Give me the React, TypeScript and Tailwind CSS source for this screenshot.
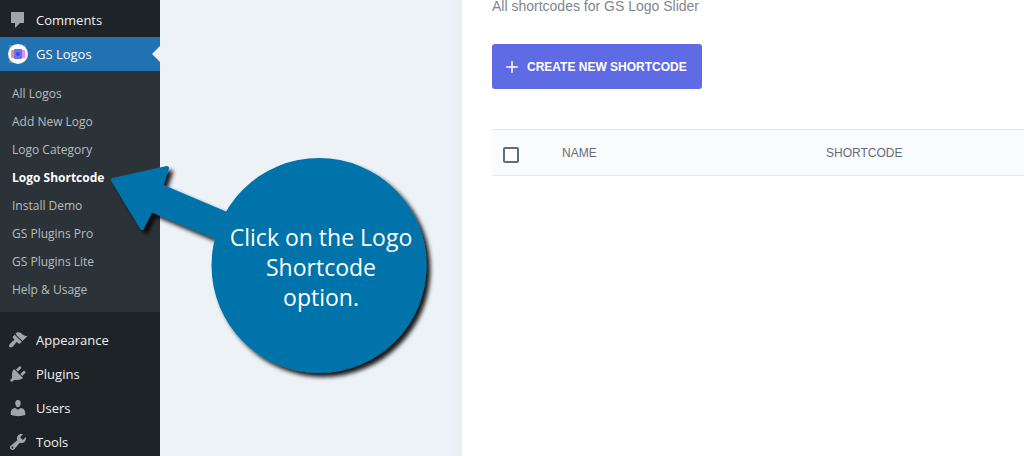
import { Plus } from 'lucide-react';

interface IconProps {
  path: string;
}

interface MenuItemProps {
  label: string;
  icon: string;
}

const icons = {
  comments: 'M3 2h13v11h-4l-5 5v-5H3z',
  appearance:
    'M14.48 11.06L7.41 3.99l1.5-1.5c.5-.56 2.3-.47 3.51.32 1.21.8 1.43 1.28 2.91 2.1 1.18.64 2.45 1.26 4.45.85zm-.71.71L6.7 4.7 4.93 6.47c-.39.39-.39 1.02 0 1.41l1.06 1.06c.39.39.39 1.03 0 1.42-.6.6-1.43 1.11-2.21 1.69-.35.26-.7.53-1.01.84C1.43 14.23.4 16.08 1.4 17.07c.99 1 2.84-.03 4.18-1.36.31-.31.58-.66.85-1.02.57-.78 1.08-1.61 1.69-2.21.39-.39 1.02-.39 1.41 0l1.06 1.06c.39.39 1.02.39 1.41 0z',
  plugins:
    'M13.11 4.36L9.87 7.6 8 5.73l3.24-3.24c.35-.34 1.05-.2 1.56.32.52.51.66 1.21.31 1.55zm-8 1.77l.91-1.12 9.01 9.01-1.19.84c-.71.71-2.63 1.16-3.82 1.16H6.14L4.9 17.26c-.59.59-1.54.59-2.12 0-.59-.58-.59-1.53 0-2.12l1.24-1.24v-3.88c0-1.13.4-3.19 1.09-3.89zm7.26 3.97l3.24-3.24c.34-.35 1.04-.21 1.55.31.52.51.66 1.21.31 1.55l-3.24 3.25z',
  users:
    'M10 9.25c-2.27 0-2.73-3.44-2.73-3.44C7 4.02 7.82 2 9.97 2c2.16 0 2.98 2.02 2.71 3.81 0 0-.41 3.44-2.68 3.44zm0 2.57L12.72 10c2.39 0 4.52 2.33 4.52 4.53v2.49s-3.65 1.13-7.24 1.13c-3.65 0-7.24-1.13-7.24-1.13v-2.49c0-2.25 1.94-4.48 4.47-4.48z',
  tools:
    'M16.68 9.77c-1.34 1.34-3.3 1.67-4.95.99l-5.41 6.52c-.99.99-2.59.99-3.58 0s-.99-2.59 0-3.57l6.52-5.42c-.68-1.65-.35-3.61.99-4.95 1.28-1.28 3.12-1.62 4.72-1.06l-2.89 2.89 2.82 2.82 2.86-2.87c.53 1.58.18 3.39-1.08 4.65zM3.81 16.21c.4.39 1.04.39 1.43 0 .4-.4.4-1.04 0-1.43-.39-.4-1.03-.4-1.43 0-.39.39-.39 1.03 0 1.43z',
};

const submenu = [
  'All Logos',
  'Add New Logo',
  'Logo Category',
  'Logo Shortcode',
  'Install Demo',
  'GS Plugins Pro',
  'GS Plugins Lite',
  'Help & Usage',
];

const bottomItems = [
  { label: 'Appearance', icon: icons.appearance },
  { label: 'Plugins', icon: icons.plugins },
  { label: 'Users', icon: icons.users },
  { label: 'Tools', icon: icons.tools },
];

function MenuIcon({ path }: IconProps) {
  return (
    <svg viewBox="0 0 20 20" className="w-5 h-5 fill-[#a0a5aa]" aria-hidden="true">
      <path d={path} />
    </svg>
  );
}

function MenuItem({ label, icon }: MenuItemProps) {
  return (
    <li>
      <a href="#" className="flex items-center gap-2 h-[34px] pl-2 leading-5 text-[#f0f0f1]">
        <MenuIcon path={icon} />
        {label}
      </a>
    </li>
  );
}

function GsLogo() {
  return (
    <svg viewBox="0 0 20 20" className="w-5 h-5" aria-hidden="true">
      <path d="M1 1h4v4H1zM15 1h3v3h-3zM1 15h4v4H1z" fill="#9a9590" opacity=".6" />
      <circle cx="10" cy="10" r="10" fill="#fbfafd" />
      <rect x="3" y="6" width="5" height="8" rx="1" fill="#f5917b" />
      <rect x="12" y="6" width="5" height="8" rx="1" fill="#e58cf0" />
      <rect x="6" y="5" width="8" height="10" rx="1" fill="#6674f0" />
      <circle cx="10" cy="10" r="2" fill="#4047e8" />
    </svg>
  );
}

function Sidebar() {
  return (
    <nav className="w-40 shrink-0 bg-[#1d2327] pt-[3px] font-['Open_Sans',sans-serif] text-[13px]">
      <ul>
        <MenuItem label="Comments" icon={icons.comments} />
        <li>
          <a href="#" className="relative flex items-center gap-2 h-[34px] pl-2 leading-5 bg-[#2271b1] text-white">
            <GsLogo />
            GS Logos
            <span className="absolute right-0 top-[9px] border-8 border-l-0 border-transparent border-r-[#f0f0f1]"></span>
          </a>
          <ul className="bg-[#2c3338] pt-[9px] pb-2 mb-[11px]">
            {submenu.map((label) => (
              <li key={label}>
                <a
                  href="#"
                  className={
                    label === 'Logo Shortcode'
                      ? 'flex items-center h-7 pl-3 text-xs font-bold text-white'
                      : 'flex items-center h-7 pl-3 text-xs text-[#b8bcbf]'
                  }
                >
                  {label}
                </a>
              </li>
            ))}
          </ul>
        </li>
        {bottomItems.map((item) => (
          <MenuItem key={item.label} label={item.label} icon={item.icon} />
        ))}
      </ul>
    </nav>
  );
}

function ShortcodePanel() {
  return (
    <section className="flex-1 bg-white pl-[30px] shadow-[0_0_14px_rgba(60,80,110,0.06)] font-['Liberation_Sans',sans-serif]">
      <p className="h-11 text-sm leading-3 text-[#7f8690]">All shortcodes for GS Logo Slider</p>
      <button className="flex items-center gap-[6px] h-[45px] pl-[11px] pr-[15px] rounded-[3px] bg-[#5f6be5] text-xs font-bold text-white">
        <Plus className="w-[18px] h-[18px]" strokeWidth={2} />
        CREATE NEW SHORTCODE
      </button>
      <table className="w-full mt-10 table-fixed border-y border-[#e6e8eb] bg-[#fafbfd] text-xs text-[#626d7c]">
        <thead>
          <tr className="h-[46px] text-left">
            <th className="w-[70px] pl-[11px] pt-1">
              <input
                type="checkbox"
                aria-label="Select all shortcodes"
                className="block w-4 h-4 appearance-none rounded-[2px] border-2 border-[#626d7c] bg-white"
              />
            </th>
            <th className="w-[264px] font-normal">NAME</th>
            <th className="font-normal">SHORTCODE</th>
          </tr>
        </thead>
      </table>
    </section>
  );
}

// Round note with an arrow that points at the active submenu entry
function Callout() {
  return (
    <div className="absolute left-[100px] top-[150px] w-[340px] h-[240px] pointer-events-none">
      <svg viewBox="0 0 340 240" className="w-full h-full overflow-visible" aria-hidden="true">
        <defs>
          <filter id="shade" x="-10%" y="-10%" width="120%" height="120%">
            <feDropShadow dx="4" dy="4" stdDeviation="2" floodColor="#000" floodOpacity="0.9" />
          </filter>
        </defs>
        <g fill="#0073aa" filter="url(#shade)">
          <path
            d="M13 30 L67 18 L61 36 L127 64 L118 88 L51 60 L42 78 Z"
            stroke="#0073aa"
            strokeWidth="4"
            strokeLinejoin="round"
          />
          <circle cx="219" cy="115.5" r="107.5" />
        </g>
      </svg>
      <p className="absolute left-[121px] top-[72px] w-[200px] text-center font-['Open_Sans',sans-serif] text-[23px] leading-[30px] text-white">
        Click on the Logo
        <br />
        Shortcode
        <br />
        option.
      </p>
    </div>
  );
}

export default function App() {
  return (
    <div className="relative flex h-screen overflow-hidden bg-[#edf2f6]">
      <Sidebar />
      <main className="flex flex-1 pl-[302px]">
        <ShortcodePanel />
      </main>
      <Callout />
    </div>
  );
}
